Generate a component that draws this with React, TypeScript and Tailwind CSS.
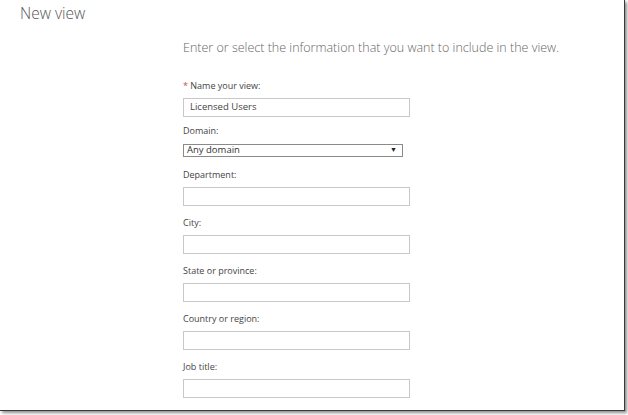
import React from "react";

const fields = ["Department:", "City:", "State or province:", "Country or region:", "Job title:"];

function Field({ label }: { label: string }) {
  return (
    <div className="mt-[12px] first:mt-[12px] flex flex-col">
      <div className="h-[12px] text-[9px] leading-[12px] text-[#444]">{label}</div>
      <div className="mt-[6px] h-[19px] w-[227px] border border-[#c8c8c8] bg-white" />
    </div>
  );
}

export default function App() {
  return (
    <div className="w-[628px] h-[415px] bg-white" style={{ fontFamily: '"Open Sans", "Liberation Sans", sans-serif' }}>
      <div className="w-[625px] h-[411px] border-r border-b border-[#3a3a3a] shadow-[2px_2px_3px_rgba(0,0,0,0.45)] bg-white overflow-hidden">
        <div className="pl-[20px] pt-[3px] text-[15.5px] leading-[20px] font-light text-[#555]">New view</div>
        <div className="pl-[183px] pt-[17px]">
          <div className="text-[12.5px] leading-[16px] font-light text-[#666]">
            Enter or select the information that you want to include in the view.
          </div>
          <div className="mt-[24px] flex flex-col">
            <div className="flex flex-col">
              <div className="h-[12px] text-[9px] leading-[12px] text-[#444]">
                <span className="text-[#c0504d]">*</span> Name your view:
              </div>
              <div className="mt-[6px] h-[19px] w-[227px] border border-[#c8c8c8] bg-white flex items-center pl-[6px] text-[9.5px] text-[#444]">
                Licensed Users
              </div>
            </div>
            <div className="mt-[8px] flex flex-col">
              <div className="h-[12px] text-[9px] leading-[12px] text-[#444]">Domain:</div>
              <div className="mt-[7px] h-[13px] w-[220px] border border-[#8a8a8a] bg-white flex items-center justify-between pl-[3px] pr-[5px] text-[9.5px] text-[#333]">
                <span>Any domain</span>
                <span className="text-[7px] text-[#222]">▼</span>
              </div>
            </div>
            {fields.map((f, i) => (
              <div key={f} className={i === 0 ? "mt-[12px] flex flex-col" : "mt-[11px] flex flex-col"}>
                <div className="h-[12px] text-[9px] leading-[12px] text-[#444]">{f}</div>
                <div className="mt-[6px] h-[19px] w-[227px] border border-[#c8c8c8] bg-white" />
              </div>
            ))}
          </div>
        </div>
      </div>
    </div>
  );
}
